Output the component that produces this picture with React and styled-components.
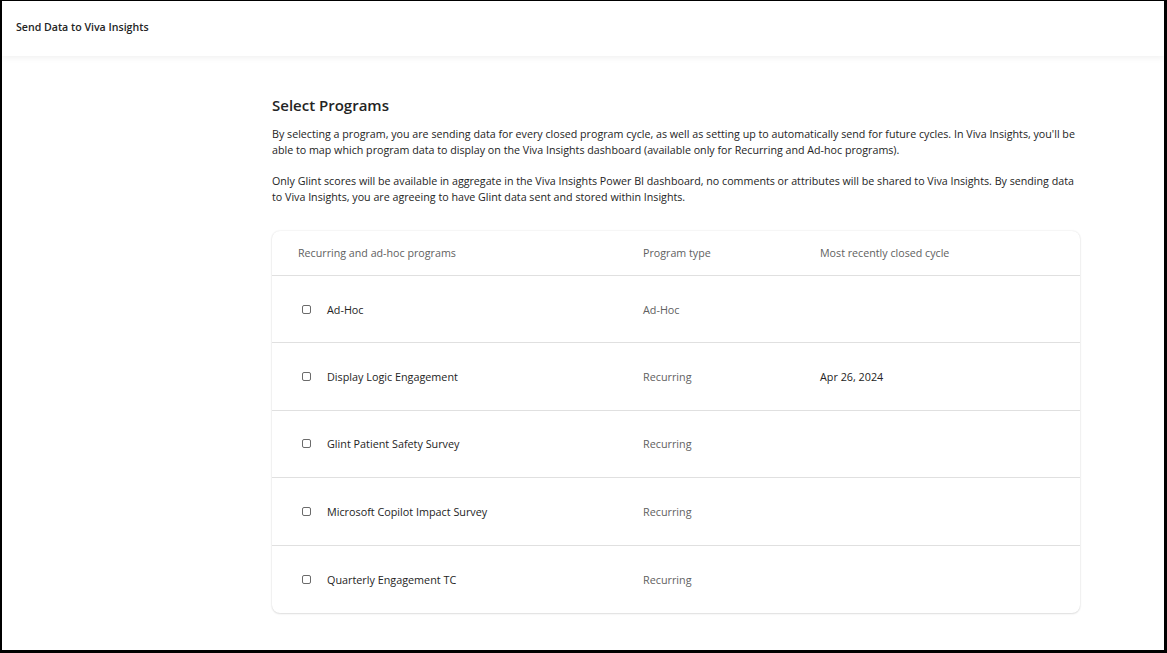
import styled, { createGlobalStyle } from 'styled-components';

const programs = [
  { name: 'Ad-Hoc', type: 'Ad-Hoc', closed: '' },
  { name: 'Display Logic Engagement', type: 'Recurring', closed: 'Apr 26, 2024' },
  { name: 'Glint Patient Safety Survey', type: 'Recurring', closed: '' },
  { name: 'Microsoft Copilot Impact Survey', type: 'Recurring', closed: '' },
  { name: 'Quarterly Engagement TC', type: 'Recurring', closed: '' },
];

export default function App() {
  return (
    <>
      <GlobalStyle />
      <Frame>
        <Header>
          <HeaderTitle>Send Data to Viva Insights</HeaderTitle>
        </Header>
        <Main>
          <Section>
            <Title>Select Programs</Title>
            <Paragraph>
              By selecting a program, you are sending data for every closed program cycle, as well as setting up to
              automatically send for future cycles. In Viva Insights, you'll be able to map which program data to display
              on the Viva Insights dashboard (available only for Recurring and Ad-hoc programs).
            </Paragraph>
            <Paragraph>
              Only Glint scores will be available in aggregate in the Viva Insights Power BI dashboard, no comments or
              attributes will be shared to Viva Insights. By sending data to Viva Insights, you are agreeing to have Glint
              data sent and stored within Insights.
            </Paragraph>
            <Card>
              <HeadRow>
                <HeadCell>Recurring and ad-hoc programs</HeadCell>
                <HeadCell>Program type</HeadCell>
                <HeadCell>Most recently closed cycle</HeadCell>
              </HeadRow>
              {programs.map((p) => (
                <Row key={p.name}>
                  <NameCell>
                    <Checkbox type="checkbox" aria-label={p.name} />
                    {p.name}
                  </NameCell>
                  <Cell $muted>{p.type}</Cell>
                  <Cell>{p.closed}</Cell>
                </Row>
              ))}
            </Card>
          </Section>
        </Main>
      </Frame>
    </>
  );
}

const GlobalStyle = createGlobalStyle`
  html, body {
    margin: 0;
    background: #000;
  }
  body {
    font-family: "Open Sans", "Noto Sans", sans-serif;
    color: #242424;
  }
  * {
    box-sizing: border-box;
  }
`;

const Frame = styled.div`
  height: 653px;
  border-style: solid;
  border-color: #000;
  border-width: 1px 3px 3px 2px;
  background: #fff;
  display: flex;
  flex-direction: column;
  overflow: hidden;
`;

const Header = styled.header`
  height: 55px;
  flex-shrink: 0;
  display: flex;
  align-items: flex-start;
  padding: 18px 0 0 14px;
  background: #fff;
  box-shadow: 0 2px 6px rgba(0, 0, 0, 0.06);
  position: relative;
  z-index: 1;
`;

const HeaderTitle = styled.h1`
  margin: 0;
  font-size: 10.6px;
  line-height: 16px;
  font-weight: 600;
  color: #242424;
`;

const Main = styled.main`
  flex: 1;
  padding: 39px 0 0 270px;
`;

const Section = styled.section`
  width: 808px;
`;

const Title = styled.h2`
  margin: 0 0 11px;
  font-size: 15px;
  line-height: 20px;
  font-weight: 600;
  color: #242424;
`;

const Paragraph = styled.p`
  margin: 0 0 15px;
  font-size: 10.7px;
  line-height: 16px;
  color: #242424;
`;

const Card = styled.div`
  margin-top: 26px;
  border-radius: 8px;
  background: #fff;
  box-shadow: 0 0 2px rgba(0, 0, 0, 0.12), 0 1px 2px rgba(0, 0, 0, 0.1);
  overflow: hidden;
`;

const columns = '345px 177px 1fr';

const HeadRow = styled.div`
  display: grid;
  grid-template-columns: ${columns};
  align-items: center;
  height: 45px;
  padding-left: 26px;
  border-bottom: 1px solid #e0e0e0;
`;

const HeadCell = styled.div`
  font-size: 10.7px;
  color: #616161;
`;

const Row = styled.div`
  display: grid;
  grid-template-columns: ${columns};
  align-items: center;
  height: 67.4px;
  padding-left: 26px;
  border-bottom: 1px solid #e0e0e0;

  &:last-child {
    border-bottom: none;
  }
`;

const NameCell = styled.div`
  display: flex;
  align-items: center;
  gap: 16px;
  font-size: 10.8px;
  color: #242424;
`;

const Cell = styled.div`
  font-size: 10.8px;
  color: ${(p) => (p.$muted ? '#616161' : '#242424')};
`;

const Checkbox = styled.input`
  appearance: none;
  margin: 0 0 0 4px;
  width: 9px;
  height: 9px;
  border: 1px solid #6b6b6b;
  border-radius: 2px;
  background: #fff;
`;
